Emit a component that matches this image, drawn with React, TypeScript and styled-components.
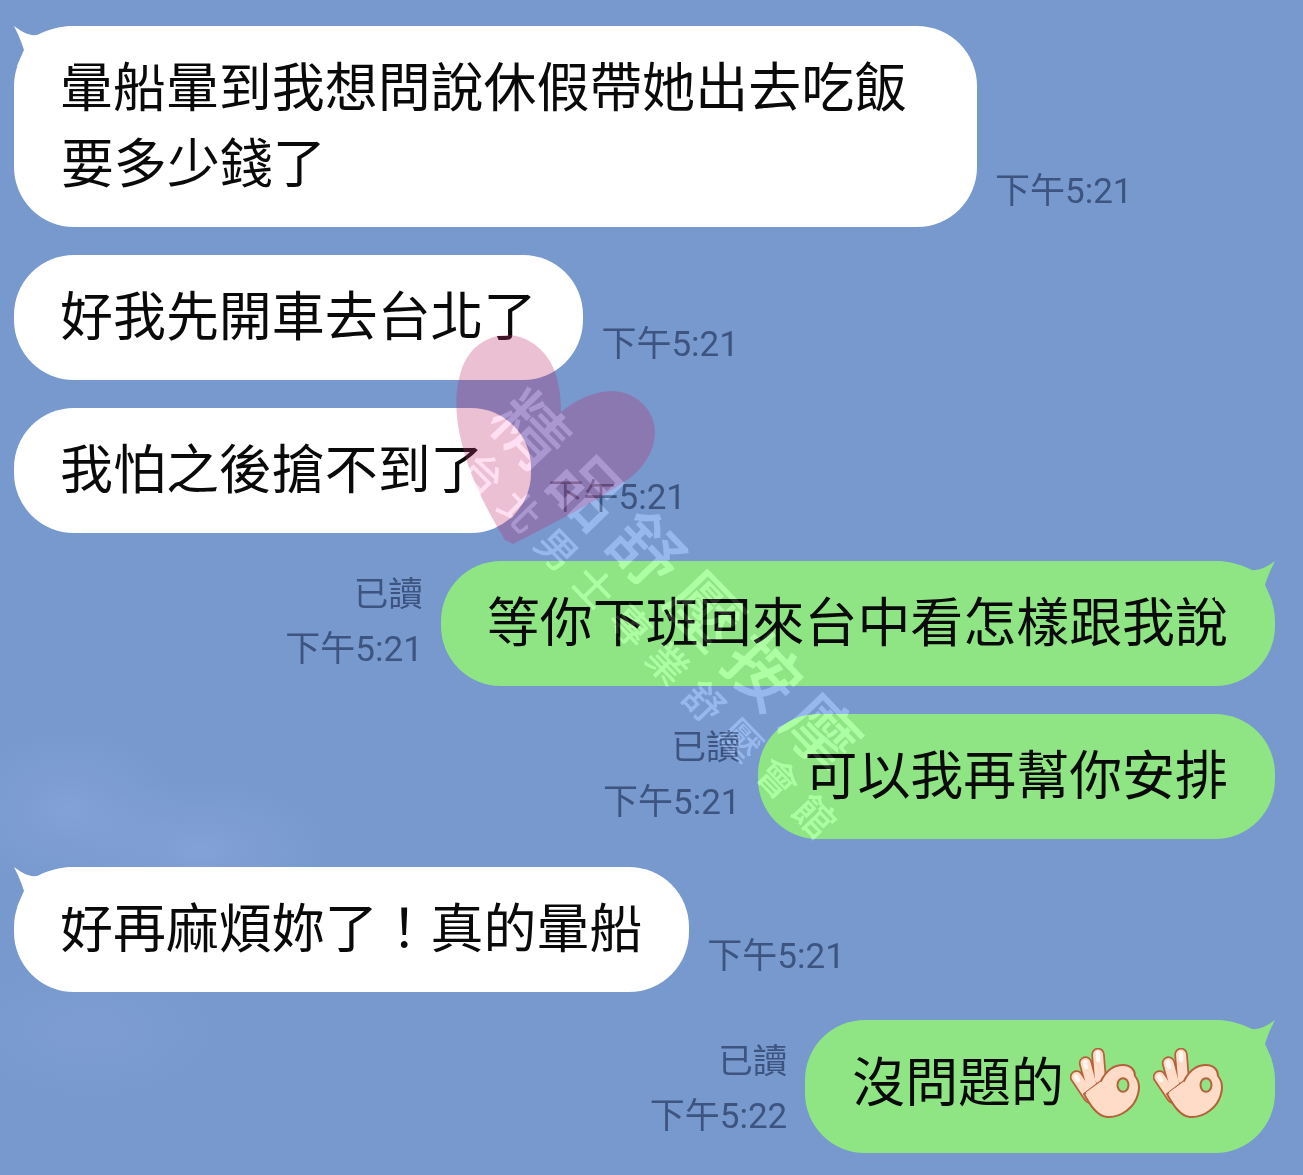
import React from "react";
import styled, { createGlobalStyle } from "styled-components";

const GlobalStyle = createGlobalStyle`
  html, body { margin: 0; padding: 0; background: #7799ce; }
`;

const Page = styled.main`
  position: relative;
  width: 1303px;
  height: 1175px;
  overflow: hidden;
  box-sizing: border-box;
  padding: 26px 28px 0 14px;
  display: flex;
  flex-direction: column;
  gap: 28px;
  background-color: #7799ce;
  background-image:
    radial-gradient(ellipse 110px 80px at 70px 810px, rgba(140, 168, 220, 0.55), transparent),
    radial-gradient(ellipse 130px 70px at 200px 850px, rgba(140, 168, 222, 0.55), transparent),
    radial-gradient(ellipse 130px 70px at 90px 1030px, rgba(136, 164, 216, 0.4), transparent);
  font-family: "Noto Sans CJK TC", "Noto Sans", sans-serif;
`;

const Row = styled.div<{ $mine?: boolean }>`
  display: flex;
  flex-direction: ${(p) => (p.$mine ? "row-reverse" : "row")};
  align-items: flex-end;
  gap: ${(p) => (p.$mine ? "18px" : "18px")};
`;

const Bubble = styled.div<{ $mine?: boolean; $width?: number }>`
  position: relative;
  box-sizing: border-box;
  width: ${(p) => (p.$width ? `${p.$width}px` : "auto")};
  padding: 20px 47px 29px 47px;
  border-radius: 60px;
  background: ${(p) => (p.$mine ? "#8fe584" : "#ffffff")};
  color: #0a0a0a;
  font-size: 52.95px;
  line-height: 76px;
  white-space: pre-line;
  text-indent: -1px;
`;

const EmojiBubble = styled(Bubble)`
  display: flex;
  align-items: center;
  height: 133px;
  padding: 0 52px 15px 47px;
  text-indent: 0;
`;

const Hands = styled.span`
  display: inline-flex;
  gap: 13px;
  margin-left: 6px;
  margin-top: 9px;
`;

const Tail = styled.svg<{ $mine?: boolean }>`
  position: absolute;
  top: 0;
  left: ${(p) => (p.$mine ? "auto" : "0")};
  right: ${(p) => (p.$mine ? "0" : "auto")};
  width: 60px;
  height: 40px;
  transform: ${(p) => (p.$mine ? "scaleX(-1)" : "none")};
  fill: ${(p) => (p.$mine ? "#8fe584" : "#ffffff")};
`;

const Meta = styled.div<{ $read?: boolean }>`
  display: flex;
  flex-direction: column;
  align-items: flex-end;
  margin-bottom: ${(p) => (p.$read ? "8px" : "7px")};
  color: #3d5480;
  font-family: Roboto, "Noto Sans CJK TC", sans-serif;
  line-height: 56px;
`;

const ReadMark = styled.span`
  font-size: 34.5px;
  line-height: 55px;
`;

const Time = styled.span`
  font-size: 35px;
  white-space: nowrap;
`;

const WatermarkHeart = styled.svg`
  position: absolute;
  left: 450px;
  top: 330px;
  width: 210px;
  height: 220px;
  pointer-events: none;
`;

const WatermarkText = styled.span<{ $size: number; $spacing: number; $x: number; $y: number }>`
  position: absolute;
  left: ${(p) => p.$x}px;
  top: ${(p) => p.$y}px;
  transform: translate(-50%, -50%) rotate(46deg);
  font-size: ${(p) => p.$size}px;
  letter-spacing: ${(p) => p.$spacing}px;
  line-height: 1;
  font-weight: 500;
  white-space: nowrap;
  color: rgba(255, 255, 255, 0.12);
  mix-blend-mode: plus-lighter;
  pointer-events: none;
`;

const TailShape = ({ mine }: { mine?: boolean }) => (
  <Tail $mine={mine} viewBox="0 0 60 40" aria-hidden="true">
    <path d="M0 0C7 5 14 10 23 9C33 4 45 0 60 0L60 40L3 40L9 26L10 24C7 14 3 6 0 0Z" />
  </Tail>
);

const OkHand = () => (
  <svg width="70" height="71" viewBox="-1 -1 70 71" aria-hidden="true">
    <g fill="none" strokeLinecap="round">
      <path d="M5.5 28L19 48" stroke="#b5623a" strokeWidth="13.5" />
      <path d="M14.5 14L21 38" stroke="#b5623a" strokeWidth="13.5" />
      <path d="M27 5.5L29 30" stroke="#b5623a" strokeWidth="13.5" />
      <path d="M5.5 28L19 48" stroke="#ffdcc8" strokeWidth="10" />
      <path d="M14.5 14L21 38" stroke="#ffdcc8" strokeWidth="10" />
      <path d="M27 5.5L29 30" stroke="#ffdcc8" strokeWidth="10" />
      <path d="M5 27.5L7 31" stroke="#fff6f0" strokeWidth="4.5" />
      <path d="M14 13L15 18" stroke="#fff6f0" strokeWidth="4.5" />
      <path d="M26.8 4L27.2 11" stroke="#fff6f0" strokeWidth="4.5" />
    </g>
    <path
      d="M13 45L30 32C35 22 43 16 52 16C60 16 64 21 64 27C68 32 69 38 67 45C64 58 50 69 36 68C26 67 19 56 13 45Z"
      fill="#ffdcc8"
      stroke="#b5623a"
      strokeWidth="2"
      strokeLinejoin="round"
    />
    <path d="M16 45L31 34" fill="none" stroke="#ffdcc8" strokeWidth="4" />
    <ellipse cx="52" cy="36" rx="5.5" ry="6.8" fill="#8fe584" stroke="#b5623a" strokeWidth="2" />
  </svg>
);

const Stamp = ({ time, read }: { time: string; read?: boolean }) => (
  <Meta $read={read}>
    {read && <ReadMark>已讀</ReadMark>}
    <Time>{time}</Time>
  </Meta>
);

export default function App() {
  return (
    <Page>
      <GlobalStyle />
      <Row>
        <Bubble $width={963}>
          <TailShape />
          {"暈船暈到我想問說休假帶她出去吃飯\n要多少錢了"}
        </Bubble>
        <Stamp time="下午5:21" />
      </Row>
      <Row>
        <Bubble>好我先開車去台北了</Bubble>
        <Stamp time="下午5:21" />
      </Row>
      <Row>
        <Bubble>我怕之後搶不到了</Bubble>
        <Stamp time="下午5:21" />
      </Row>
      <Row $mine>
        <Bubble $mine>
          <TailShape mine />
          等你下班回來台中看怎樣跟我說
        </Bubble>
        <Stamp time="下午5:21" read />
      </Row>
      <Row $mine>
        <Bubble $mine>可以我再幫你安排</Bubble>
        <Stamp time="下午5:21" read />
      </Row>
      <Row>
        <Bubble>
          <TailShape />
          好再麻煩妳了！真的暈船
        </Bubble>
        <Stamp time="下午5:21" />
      </Row>
      <Row $mine>
        <EmojiBubble $mine>
          <TailShape mine />
          沒問題的
          <Hands>
            <OkHand />
            <OkHand />
          </Hands>
        </EmojiBubble>
        <Stamp time="下午5:22" read />
      </Row>

      <WatermarkHeart viewBox="450 330 210 220" aria-hidden="true">
        <path
          d="M505 540C490 515 470 480 461 440C456 420 454 395 460 375C466 350 485 335 508 335C530 336 550 352 557 378C560 390 561 402 561 412C575 400 595 391 613 391C636 392 655 410 655 432C655 452 642 470 627 480C590 505 550 525 513 544Z"
          fill="rgba(190, 47, 110, 0.3)"
        />
      </WatermarkHeart>
      <WatermarkText $size={72} $spacing={12} $x={683} $y={582}>
        精品舒壓按摩
      </WatermarkText>
      <WatermarkText $size={40} $spacing={13} $x={655} $y={648}>
        台北男士專業舒壓會館
      </WatermarkText>
    </Page>
  );
}
